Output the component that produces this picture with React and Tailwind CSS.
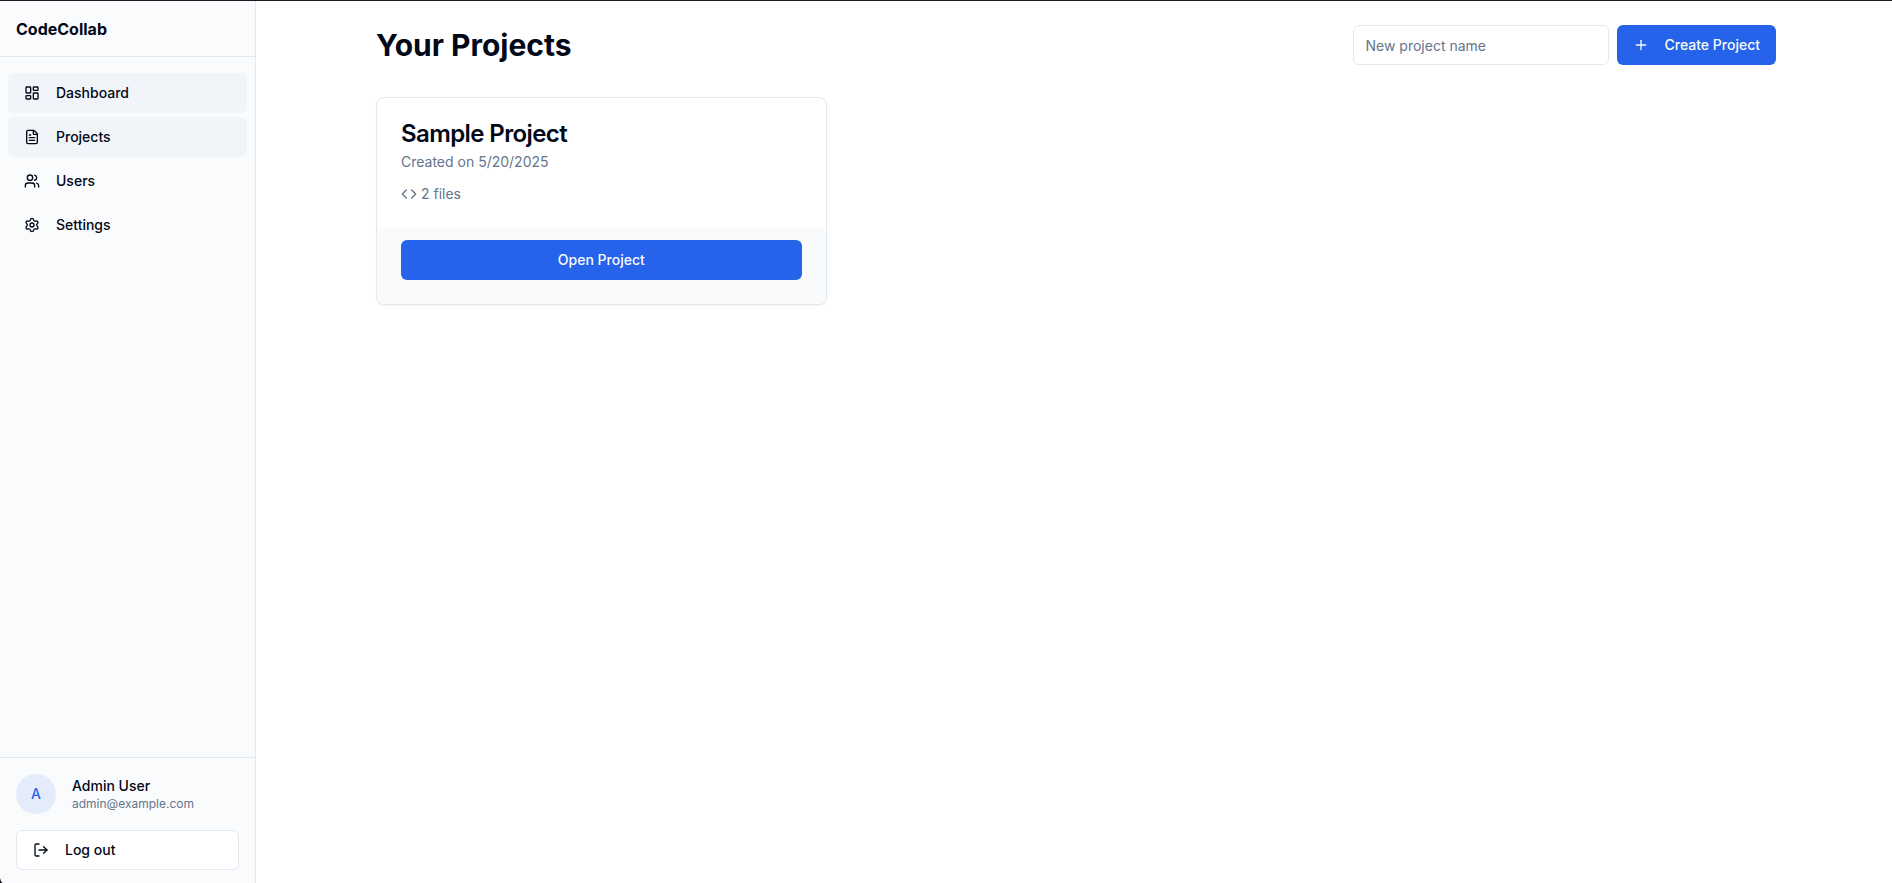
import React from "react";
import {
  Code,
  FileText,
  LayoutDashboard,
  LogOut,
  Plus,
  Settings,
  Users,
} from "lucide-react";

const navItems = [
  { label: "Dashboard", icon: LayoutDashboard, highlighted: true },
  { label: "Projects", icon: FileText, highlighted: true },
  { label: "Users", icon: Users, highlighted: false },
  { label: "Settings", icon: Settings, highlighted: false },
];

const projects = [{ name: "Sample Project", created: "5/20/2025", files: 2 }];

function Sidebar() {
  return (
    <aside className="flex w-64 shrink-0 flex-col border-r border-[#e2e8f0] bg-[#fafbfd]">
      <div className="flex h-14 items-center border-b border-[#e2e8f0] px-4">
        <span className="text-base font-bold">CodeCollab</span>
      </div>
      <nav className="flex flex-1 flex-col gap-1 px-2 py-4">
        {navItems.map(({ label, icon: Icon, highlighted }) => (
          <a
            key={label}
            href={"#" + label.toLowerCase()}
            className={
              highlighted
                ? "flex h-10 items-center gap-4 rounded-md bg-[#f1f5f9] px-4 text-sm font-medium"
                : "flex h-10 items-center gap-4 rounded-md px-4 text-sm font-medium"
            }
          >
            <Icon size={16} aria-hidden="true" />
            {label}
          </a>
        ))}
      </nav>
      <div className="flex flex-col gap-4 border-t border-[#e2e8f0] px-4 pt-4 pb-[13px]">
        <div className="flex items-center gap-4">
          <div className="flex size-10 items-center justify-center rounded-full bg-[#e4ebfb] text-sm font-medium text-[#2563eb]">
            A
          </div>
          <div>
            <p className="text-sm font-medium">Admin User</p>
            <p className="text-xs text-[#64748b]">admin@example.com</p>
          </div>
        </div>
        <button
          type="button"
          className="flex h-10 w-full items-center gap-4 rounded-md border border-[#e2e8f0] bg-white px-4 text-sm font-medium"
        >
          <LogOut size={16} aria-hidden="true" />
          Log out
        </button>
      </div>
    </aside>
  );
}

function ProjectCard({ project }) {
  return (
    <article className="overflow-hidden rounded-lg border border-[#e2e8f0] bg-white shadow-xs">
      <div className="flex flex-col gap-[6px] px-6 pt-6 pb-3">
        <h2 className="text-2xl leading-none font-semibold tracking-tight">
          {project.name}
        </h2>
        <p className="text-sm text-[#64748b]">{"Created on " + project.created}</p>
      </div>
      <div className="flex items-center gap-1 px-6 pb-6 text-sm text-[#64748b]">
        <Code size={16} aria-hidden="true" />
        <span>{project.files + " files"}</span>
      </div>
      <div className="bg-[#f9fafc] px-6 pt-3 pb-6">
        <button
          type="button"
          className="h-10 w-full rounded-md bg-[#2563eb] text-sm font-medium text-slate-50"
        >
          Open Project
        </button>
      </div>
    </article>
  );
}

export default function App() {
  return (
    <div className="relative flex min-h-screen border-t border-[#1b1b1f] bg-white font-['Inter',sans-serif] text-[#020817]">
      <Sidebar />
      <main className="flex-1 py-6 pl-1">
        <div className="mx-auto max-w-[1400px]">
          <header className="mb-8 flex items-center justify-between">
            <h1 className="text-3xl font-bold">Your Projects</h1>
            <form className="flex gap-2" onSubmit={(e) => e.preventDefault()}>
              <input
                type="text"
                aria-label="New project name"
                placeholder="New project name"
                className="h-10 w-64 rounded-md border border-[#e2e8f0] bg-white px-3 text-sm placeholder:text-[#64748b]"
              />
              <button
                type="submit"
                className="flex h-10 items-center gap-4 rounded-md bg-[#2563eb] px-4 text-sm font-medium text-slate-50"
              >
                <Plus size={16} aria-hidden="true" />
                Create Project
              </button>
            </form>
          </header>
          <div className="grid grid-cols-3 gap-6">
            {projects.map((project) => (
              <ProjectCard key={project.name} project={project} />
            ))}
          </div>
        </div>
      </main>
      <svg
        className="absolute bottom-0 left-0"
        width="3"
        height="5"
        viewBox="0 0 3 5"
        aria-hidden="true"
      >
        <path d="M0 0Q0.6 3.4 2.4 5H0Z" fill="#1b1b1f" />
      </svg>
    </div>
  );
}
